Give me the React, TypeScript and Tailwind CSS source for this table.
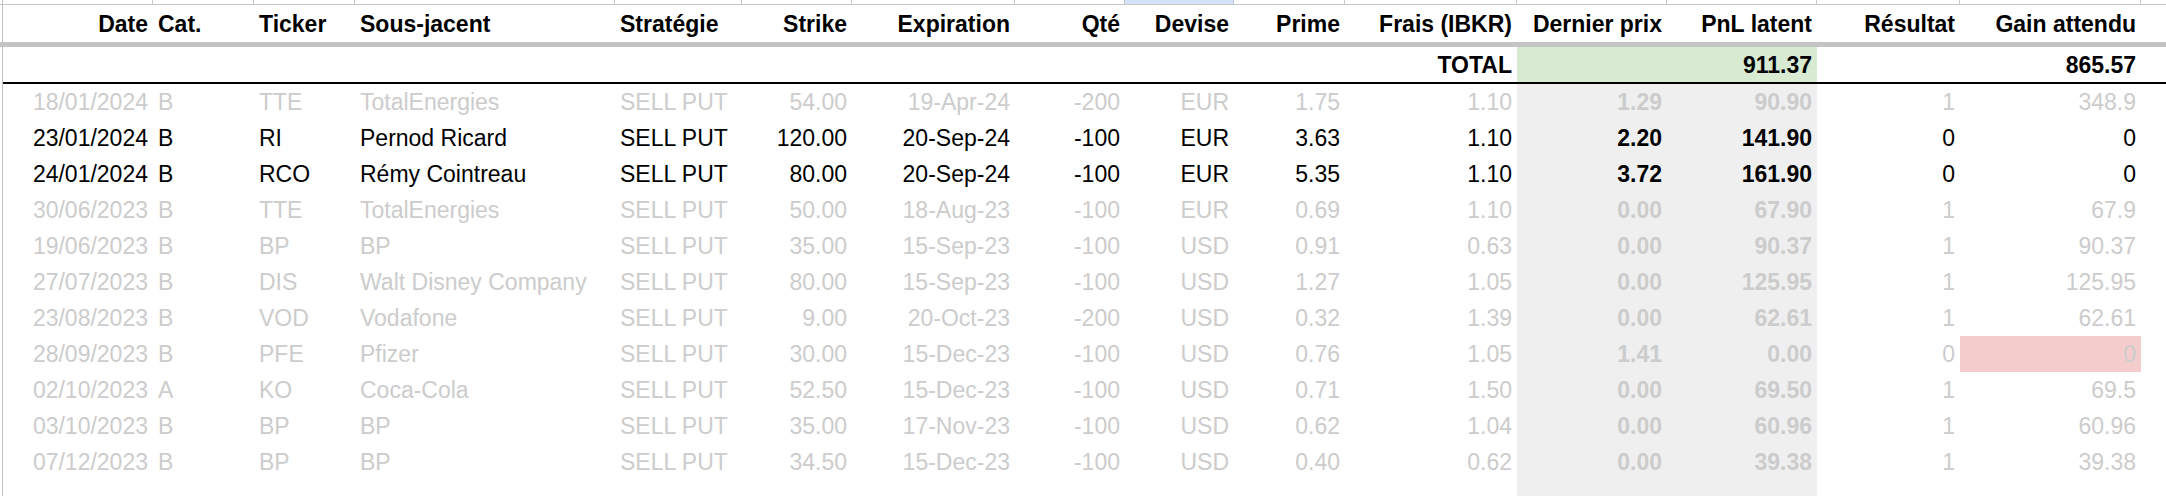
import React from 'react'

type Col = { w: string; a: string }

// column widths measured off the sheet, alignment per column
const cols: Col[] = [
  { w: 'w-[150px]', a: 'justify-end' }, // Date
  { w: 'w-[101px]', a: 'justify-start' }, // Cat.
  { w: 'w-[101px]', a: 'justify-start' }, // Ticker
  { w: 'w-[260px]', a: 'justify-start' }, // Sous-jacent
  { w: 'w-[127px]', a: 'justify-start' }, // Stratégie
  { w: 'w-[110px]', a: 'justify-end' }, // Strike
  { w: 'w-[163px]', a: 'justify-end' }, // Expiration
  { w: 'w-[110px]', a: 'justify-end' }, // Qté
  { w: 'w-[109px]', a: 'justify-end' }, // Devise
  { w: 'w-[111px]', a: 'justify-end' }, // Prime
  { w: 'w-[172px]', a: 'justify-end' }, // Frais
  { w: 'w-[150px]', a: 'justify-end' }, // Dernier prix
  { w: 'w-[150px]', a: 'justify-end' }, // PnL latent
  { w: 'w-[143px]', a: 'justify-end' }, // Résultat
  { w: 'w-[181px]', a: 'justify-end' }, // Gain attendu
]

const headers = [
  'Date', 'Cat.', 'Ticker', 'Sous-jacent', 'Stratégie', 'Strike', 'Expiration', 'Qté', 'Devise',
  'Prime', 'Frais (IBKR)', 'Dernier prix', 'PnL latent', 'Résultat', 'Gain attendu',
]

type Row = { v: string[]; active?: boolean; loss?: boolean }

const rows: Row[] = [
  { v: ['18/01/2024', 'B', 'TTE', 'TotalEnergies', 'SELL PUT', '54.00', '19-Apr-24', '-200', 'EUR', '1.75', '1.10', '1.29', '90.90', '1', '348.9'] },
  { v: ['23/01/2024', 'B', 'RI', 'Pernod Ricard', 'SELL PUT', '120.00', '20-Sep-24', '-100', 'EUR', '3.63', '1.10', '2.20', '141.90', '0', '0'], active: true },
  { v: ['24/01/2024', 'B', 'RCO', 'Rémy Cointreau', 'SELL PUT', '80.00', '20-Sep-24', '-100', 'EUR', '5.35', '1.10', '3.72', '161.90', '0', '0'], active: true },
  { v: ['30/06/2023', 'B', 'TTE', 'TotalEnergies', 'SELL PUT', '50.00', '18-Aug-23', '-100', 'EUR', '0.69', '1.10', '0.00', '67.90', '1', '67.9'] },
  { v: ['19/06/2023', 'B', 'BP', 'BP', 'SELL PUT', '35.00', '15-Sep-23', '-100', 'USD', '0.91', '0.63', '0.00', '90.37', '1', '90.37'] },
  { v: ['27/07/2023', 'B', 'DIS', 'Walt Disney Company', 'SELL PUT', '80.00', '15-Sep-23', '-100', 'USD', '1.27', '1.05', '0.00', '125.95', '1', '125.95'] },
  { v: ['23/08/2023', 'B', 'VOD', 'Vodafone', 'SELL PUT', '9.00', '20-Oct-23', '-200', 'USD', '0.32', '1.39', '0.00', '62.61', '1', '62.61'] },
  { v: ['28/09/2023', 'B', 'PFE', 'Pfizer', 'SELL PUT', '30.00', '15-Dec-23', '-100', 'USD', '0.76', '1.05', '1.41', '0.00', '0', '0'], loss: true },
  { v: ['02/10/2023', 'A', 'KO', 'Coca-Cola', 'SELL PUT', '52.50', '15-Dec-23', '-100', 'USD', '0.71', '1.50', '0.00', '69.50', '1', '69.5'] },
  { v: ['03/10/2023', 'B', 'BP', 'BP', 'SELL PUT', '35.00', '17-Nov-23', '-100', 'USD', '0.62', '1.04', '0.00', '60.96', '1', '60.96'] },
  { v: ['07/12/2023', 'B', 'BP', 'BP', 'SELL PUT', '34.50', '15-Dec-23', '-100', 'USD', '0.40', '0.62', '0.00', '39.38', '1', '39.38'] },
]

function Edge() {
  return <div className="w-[3px] h-full shrink-0 border-r border-[#c0c0c0]" />
}

function Cell({ i, children, className = '' }: { i: number; children?: React.ReactNode; className?: string }) {
  return (
    <div className={`${cols[i].w} ${cols[i].a} h-full shrink-0 flex items-center px-[5px] whitespace-nowrap ${className}`}>
      {children}
    </div>
  )
}

export default function App() {
  return (
    <div className="w-[2166px] h-[496px] overflow-hidden bg-white font-['Liberation_Sans',Arial,sans-serif] text-[23px] leading-[26px] text-black">
      {/* column header strip, cut off */}
      <div className="flex h-[5px] border-b border-[#c4c7c5]">
        <Edge />
        {cols.map((c, i) => (
          <div key={i} className={`${c.w} h-full shrink-0 border-r border-[#c4c7c5] ${i === 8 ? 'bg-[#d3e3fd]' : ''}`} />
        ))}
      </div>

      {/* headers */}
      <div className="flex h-[37px] font-bold">
        <Edge />
        {headers.map((h, i) => (
          <Cell key={i} i={i}>{h}</Cell>
        ))}
      </div>

      {/* frozen row separator */}
      <div className="h-[5px] bg-[#c4c4c4]" />

      {/* total */}
      <div className="flex h-[35px] font-bold">
        <Edge />
        {cols.map((_, i) => (
          <Cell key={i} i={i} className={i === 11 || i === 12 ? 'bg-[#d9ead3]' : ''}>
            {i === 10 && 'TOTAL'}
            {i === 12 && '911.37'}
            {i === 14 && '865.57'}
          </Cell>
        ))}
      </div>
      <div className="flex h-[2px]">
        <Edge />
        <div className="flex-1 bg-black" />
      </div>

      {/* data */}
      {rows.map((r, ri) => (
        <div key={ri} className={`flex h-[36px] ${r.active ? 'text-black' : 'text-[#cccccc]'}`}>
          <Edge />
          {r.v.map((v, i) => (
            <Cell
              key={i}
              i={i}
              className={
                i === 11 || i === 12
                  ? 'bg-[#efefef] font-bold'
                  : i === 14 && r.loss
                    ? 'bg-[#f4cccc]'
                    : ''
              }
            >
              {v}
            </Cell>
          ))}
        </div>
      ))}

      {/* empty space under the last row */}
      <div className="flex h-[16px]">
        <Edge />
        {cols.map((_, i) => (
          <Cell key={i} i={i} className={i === 11 || i === 12 ? 'bg-[#efefef]' : ''} />
        ))}
      </div>
    </div>
  )
}
